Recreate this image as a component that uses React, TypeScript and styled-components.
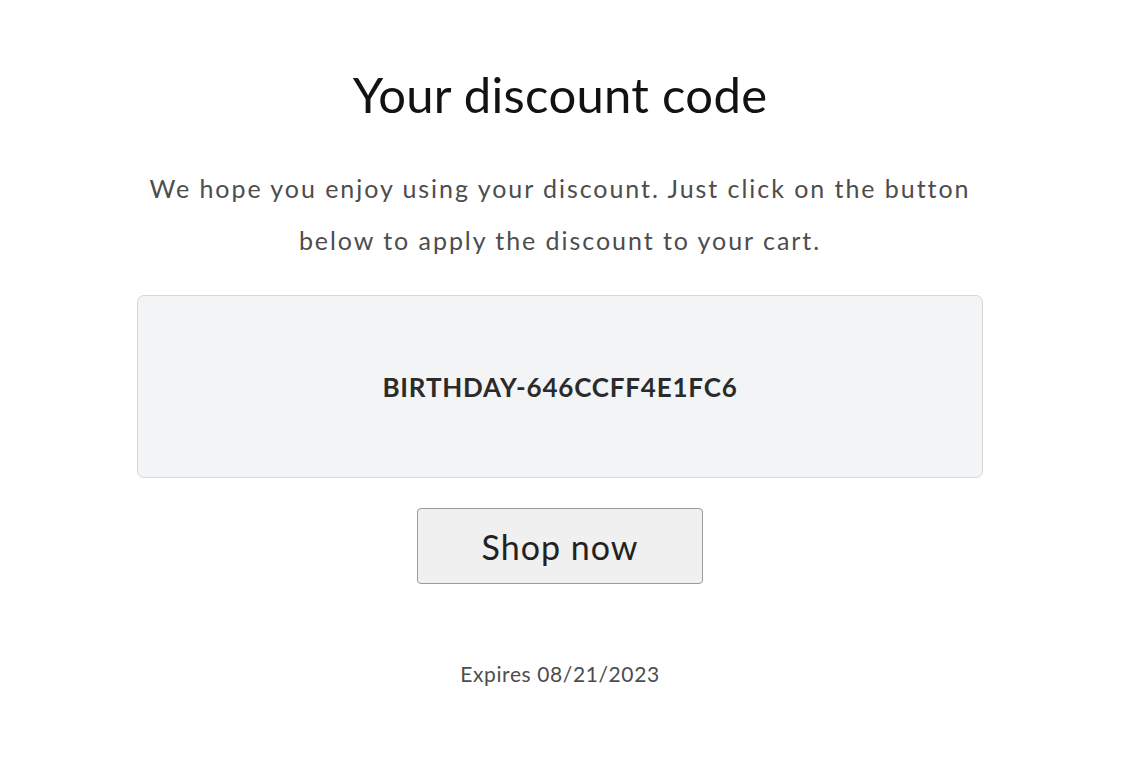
import styled, { createGlobalStyle } from "styled-components";

const GlobalStyle = createGlobalStyle`
  html, body {
    margin: 0;
    padding: 0;
    background: #ffffff;
  }
  body {
    font-family: Lato, "Liberation Sans", sans-serif;
    color: #121212;
  }
`;

const Page = styled.main`
  width: 1120px;
  min-height: 782px;
  display: flex;
  flex-direction: column;
  align-items: center;
  padding-top: 62px;
  box-sizing: border-box;
`;

const Title = styled.h1`
  margin: 0;
  font-size: 49px;
  font-weight: 400;
  line-height: 64px;
  letter-spacing: 0.3px;
  color: #121212;
`;

const Intro = styled.p`
  margin: 36px 0 0;
  width: 860px;
  text-align: center;
  font-size: 25px;
  line-height: 52px;
  letter-spacing: 1.95px;
  color: #4d4d4d;
`;

const CodeBox = styled.div`
  margin-top: 29px;
  width: 846px;
  height: 183px;
  box-sizing: border-box;
  display: flex;
  align-items: center;
  justify-content: center;
  background: #f3f4f5;
  border: 1px solid #d7d7d7;
  border-radius: 7px;
`;

const Code = styled.span`
  font-size: 26px;
  font-weight: 700;
  letter-spacing: 0.8px;
  color: #2b2b2b;
`;

const ShopButton = styled.button`
  margin-top: 30px;
  width: 286px;
  height: 76px;
  box-sizing: border-box;
  background: #f0f0f0;
  border: 1px solid #9a9a9a;
  border-radius: 4px;
  font-family: inherit;
  font-size: 34px;
  letter-spacing: 1px;
  color: #222222;
  cursor: pointer;
`;

const Expiry = styled.p`
  margin: 77px 0 0;
  font-size: 21px;
  letter-spacing: 0.6px;
  color: #4d4d4d;
`;

export default function App() {
  return (
    <>
      <GlobalStyle />
      <Page>
        <Title>Your discount code</Title>
        <Intro>
          We hope you enjoy using your discount. Just click on the button below to apply the
          discount to your cart.
        </Intro>
        <CodeBox>
          <Code>BIRTHDAY-646CCFF4E1FC6</Code>
        </CodeBox>
        <ShopButton>Shop now</ShopButton>
        <Expiry>Expires 08/21/2023</Expiry>
      </Page>
    </>
  );
}
